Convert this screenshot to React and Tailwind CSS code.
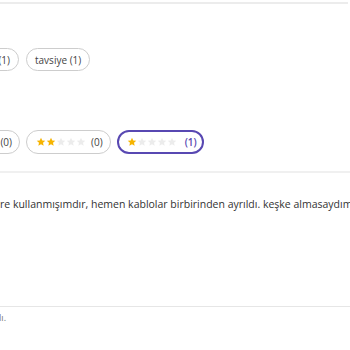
import React from 'react';

const Star = ({ on }) => (
  <svg viewBox="0 0 24 24" className="w-[10px] h-[10px] shrink-0">
    <path
      d="M12 1.8l3 6.6 7.2.7-5.4 4.8 1.6 7.1L12 17.3 5.6 21l1.6-7.1L1.8 9.1 9 8.4z"
      fill={on ? '#f6b400' : '#ececec'}
    />
  </svg>
);

const Stars = ({ n }) => (
  <span className="flex items-center gap-0">
    {[0, 1, 2, 3, 4].map(i => <Star key={i} on={i < n} />)}
  </span>
);

const Chip = ({ children, active, className = '' }) => (
  <span
    className={`flex items-center shrink-0 rounded-full text-[10px] leading-none whitespace-nowrap ${
      active ? 'border-2 border-[#5848b2] text-[#5848b2]' : 'border border-[#cdcdcd] text-[#444]'
    } ${className}`}
  >
    {children}
  </span>
);

// keeps the first item flush to the left edge of the window, cut off like in the page scroll
const Edge = ({ w, children }) => (
  <div className={`flex justify-end shrink-0 ${w}`}>{children}</div>
);

export default function App() {
  return (
    <div className="w-[350px] h-[350px] overflow-hidden bg-white" style={{ fontFamily: '"Open Sans", sans-serif' }}>
      <div className="pt-[2px]">
        <div className="w-[348px] h-[2px] bg-[#ececec]" />
      </div>

      <div className="flex gap-[7px] mt-[44px]">
        <Edge w="w-[19px]">
          <Chip className="h-[23px] px-[8px]">yorum (1)</Chip>
        </Edge>
        <Chip className="h-[23px] px-[8px]">tavsiye (1)</Chip>
      </div>

      <div className="flex gap-[6px] mt-[59px]">
        <Edge w="w-[20px]">
          <Chip className="h-[24px] pl-[9px] pr-[7px] gap-[5px]"><Stars n={3} /><span>(0)</span></Chip>
        </Edge>
        <Chip className="h-[24px] pl-[9px] pr-[7px] gap-[5px]"><Stars n={2} /><span>(0)</span></Chip>
        <Chip active className="h-[24px] pl-[8px] pr-[5px] gap-[8px] font-semibold"><Stars n={1} /><span>(1)</span></Chip>
      </div>

      <div className="mt-[17px] h-[2px] bg-[#f0f0f0]" />

      <div className="flex mt-[23px] text-[10.5px] leading-[16px] text-[#333] whitespace-nowrap">
        <Edge w="w-0"><span>bir ke</span></Edge>
        <span>re kullanmışımdır, hemen kablolar birbirinden ayrıldı. keşke almasaydım keşke</span>
      </div>

      <div className="mt-[94px] h-[1px] bg-[#e6e6e6]" />

      <div className="flex mt-[5px] text-[9px] leading-[12px] text-[#777] whitespace-nowrap">
        <Edge w="w-[6px]"><span>Bu yorum faydalı.</span></Edge>
      </div>
    </div>
  );
}
